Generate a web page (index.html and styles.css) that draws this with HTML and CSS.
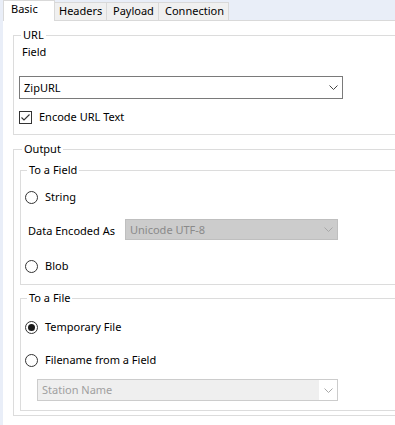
FILE: index.html
```html
<!DOCTYPE html>
<html lang="en">
<head>
<meta charset="UTF-8">
<title>Download Tool</title>
<link rel="stylesheet" href="styles.css">
</head>
<body>

<div class="tabs">
	<div class="tab active">Basic</div>
	<div class="tab headers">Headers</div>
	<div class="tab payload">Payload</div>
	<div class="tab connection">Connection</div>
</div>

<div class="panel">
	<fieldset class="group url">
		<legend>URL</legend>
		<div class="label">Field</div>
		<div class="select zip">
			<span>ZipURL</span>
			<svg class="chev" width="9" height="5" viewBox="0 0 9 5"><path d="M0.5 0.5 L4.5 4.5 L8.5 0.5" fill="none" stroke="#444" stroke-width="1"/></svg>
		</div>
		<div class="row check">
			<span class="box"><svg width="11" height="11" viewBox="0 0 11 11"><path d="M1.5 5.5 L4 8 L9.5 2.5" fill="none" stroke="#333" stroke-width="1.1"/></svg></span>
			<span>Encode URL Text</span>
		</div>
	</fieldset>

	<fieldset class="group output">
		<legend>Output</legend>

		<fieldset class="group sub to-field">
			<legend>To a Field</legend>
			<div class="row radio string"><span class="dot"></span><span>String</span></div>
			<div class="encoded">
				<span class="enc-label">Data Encoded As</span>
				<div class="select disabled">
					<span>Unicode UTF-8</span>
					<svg class="chev" width="9" height="5" viewBox="0 0 9 5"><path d="M0.5 0.5 L4.5 4.5 L8.5 0.5" fill="none" stroke="#a8a8a8" stroke-width="1"/></svg>
				</div>
			</div>
			<div class="row radio blob"><span class="dot"></span><span>Blob</span></div>
		</fieldset>

		<fieldset class="group sub to-file">
			<legend>To a File</legend>
			<div class="row radio temp"><span class="dot on"></span><span>Temporary File</span></div>
			<div class="row radio fname"><span class="dot"></span><span>Filename from a Field</span></div>
			<div class="select station">
				<span>Station Name</span>
				<span class="chev-box"><svg class="chev" width="9" height="5" viewBox="0 0 9 5"><path d="M0.5 0.5 L4.5 4.5 L8.5 0.5" fill="none" stroke="#a8a8a8" stroke-width="1"/></svg></span>
			</div>
		</fieldset>
	</fieldset>
</div>

</body>
</html>
```

FILE: styles.css
```css
* {
	box-sizing: border-box;
	margin: 0;
	padding: 0;
}
html, body {
	background: #e9eef8;
	color: #000;
	height: 100%;
	overflow: hidden;
}
body {
	font-family: "Noto Sans", sans-serif;
	font-size: 11px;
	line-height: 16px;
}

/* tab strip */
.tabs {
	display: flex;
	align-items: flex-end;
	height: 20px;
	padding-left: 3px;
}
.tab {
	height: 18px;
	line-height: 16px;
	padding-left: 6px;
	background: #f0f0f0;
	border: 1px solid #d9d9d9;
	border-bottom: none;
	margin-left: -1px;
}
.tab.active {
	position: relative;
	z-index: 2;
	height: 21px;
	margin-bottom: -1px;
	margin-left: 0;
	width: 52px;
	padding-left: 7px;
	line-height: 16px;
	background: #fff;
}
.tab.headers { width: 53px; padding-left: 4px; }
.tab.payload { width: 53px; }
.tab.connection { width: 71px; }

/* main panel */
.panel {
	margin-left: 3px;
	height: calc(100% - 20px);
	background: #fff;
	border-top: 1px solid #d9d9d9;
	padding: 6px 0 0 10px;
}

.group {
	border: 1px solid #dcdcdc;
	border-right: none;
	padding: 0 0 0 5px;
	min-width: 0;
}
.group legend {
	margin-left: 2px;
	padding: 0 2px;
	line-height: 16px;
}
.group.url {
	padding-bottom: 9px;
}
.group.output {
	margin-top: 6px;
	padding: 0 0 4px 6px;
}
.group.sub {
	margin-top: 5px;
	padding-left: 4px;
}
.group.sub legend {
	margin-left: 2px;
}
.to-field {
	padding-bottom: 10px;
}
.to-file {
	padding-bottom: 9px;
}

.label {
	margin: 1px 0 0 3px;
}

/* dropdowns */
.select {
	display: flex;
	align-items: center;
	justify-content: space-between;
	border: 1px solid #7a7a7a;
	background: #fff;
	padding-left: 4px;
	padding-right: 4px;
}
.select.zip {
	margin-top: 16px;
	width: 324px;
	height: 23px;
}
.select.disabled {
	width: 213px;
	height: 21px;
	background: #cccccc;
	border-color: #bfbfbf;
	color: #8a8a8a;
}
.select.station {
	margin: 11px 0 0 12px;
	width: 301px;
	height: 22px;
	background: #efefef;
	border-color: #cccccc;
	color: #a0a0a0;
	padding-right: 0;
}
.chev-box {
	display: flex;
	align-items: center;
	justify-content: center;
	width: 18px;
	height: 100%;
	background: #fff;
}

/* checkbox / radio rows */
.row {
	display: flex;
	align-items: center;
	gap: 7px;
	height: 16px;
}
.check {
	margin-top: 10px;
}
.box {
	display: flex;
	align-items: center;
	justify-content: center;
	width: 13px;
	height: 13px;
	border: 1px solid #333;
}
.dot {
	display: flex;
	align-items: center;
	justify-content: center;
	width: 13px;
	height: 13px;
	border: 1px solid #333;
	border-radius: 50%;
}
.dot.on::after {
	content: "";
	width: 7px;
	height: 7px;
	border-radius: 50%;
	background: #1a1a1a;
}
.radio.string { margin-top: 11px; }
.radio.blob { margin-top: 18px; }
.radio.temp { margin-top: 13px; }
.radio.fname { margin-top: 17px; }

.encoded {
	display: flex;
	align-items: center;
	margin-top: 14px;
	padding-left: 3px;
}
.enc-label {
	width: 97px;
	padding-top: 3px;
}
```
